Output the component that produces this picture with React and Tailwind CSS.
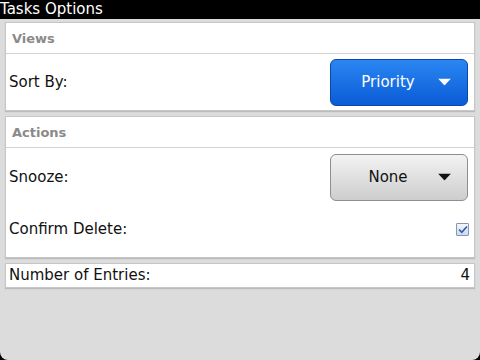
import React from 'react'

const FONT = { fontFamily: '"DejaVu Sans", "Liberation Sans", sans-serif' }

function Arrow({ color }) {
  return (
    <svg width="13" height="7" viewBox="0 0 13 7" className="absolute right-[16px] top-1/2 -translate-y-1/2">
      <path d="M0 0 L13 0 L6.5 7 Z" fill={color} />
    </svg>
  )
}

function Picker({ label, blue }) {
  return (
    <button
      className={
        'relative w-[138px] h-[47px] rounded-[6px] border text-[15px] pr-[22px] ' +
        (blue
          ? 'border-[#0b47a3] bg-gradient-to-b from-[#2a86f2] to-[#0a5bd6] text-white'
          : 'border-[#8e8e8e] bg-gradient-to-b from-[#f3f3f3] to-[#cdcdcd] text-[#111]')
      }
    >
      {label}
      <Arrow color={blue ? '#ffffff' : '#111111'} />
    </button>
  )
}

function Header({ children }) {
  return (
    <div className="h-[31px] pl-[6px] pt-[8px] border-b border-[#d2d2d2] text-[13px] font-bold text-[#8a8a8a] leading-[16px]">
      {children}
    </div>
  )
}

function Checkbox() {
  return (
    <div className="w-[13px] h-[13px] border border-[#8a96aa] rounded-[1px] bg-gradient-to-b from-[#f4f7fc] to-[#cfd9ea] flex items-center justify-center">
      <svg width="10" height="9" viewBox="0 0 10 9">
        <path d="M1 4.5 L3.8 7.3 L9 1.5" stroke="#2a5bb8" strokeWidth="1.6" fill="none" />
      </svg>
    </div>
  )
}

export default function App() {
  return (
    <div className="w-[480px] h-[360px] bg-black text-[15px]" style={FONT}>
      <div className="h-[19px] bg-black text-white text-[15px] leading-[19px] pl-0">Tasks Options</div>
      <div className="h-[341px] bg-[#dcdcdc] rounded-b-[8px] pt-[3px] px-[5px] flex flex-col gap-[5px]">
        <div className="bg-white border border-[#c6c6c6] shadow-[0_1px_1px_rgba(0,0,0,0.15)]">
          <Header>Views</Header>
          <div className="h-[56px] flex items-center justify-between pl-[3px] pr-[6px] text-[#111]">
            <span>Sort By:</span>
            <Picker label="Priority" blue />
          </div>
        </div>
        <div className="bg-white border border-[#c6c6c6] shadow-[0_1px_1px_rgba(0,0,0,0.15)] pb-[4px]">
          <Header>Actions</Header>
          <div className="h-[58px] flex items-center justify-between pl-[3px] pr-[6px] text-[#111]">
            <span>Snooze:</span>
            <Picker label="None" />
          </div>
          <div className="h-[47px] flex items-center justify-between pl-[3px] pr-[5px] text-[#111]">
            <span>Confirm Delete:</span>
            <Checkbox />
          </div>
        </div>
        <div className="h-[25px] bg-white border border-[#c6c6c6] shadow-[0_1px_1px_rgba(0,0,0,0.15)] flex items-center justify-between pl-[3px] pr-[4px] text-[#111]">
          <span>Number of Entries:</span>
          <span>4</span>
        </div>
      </div>
    </div>
  )
}
